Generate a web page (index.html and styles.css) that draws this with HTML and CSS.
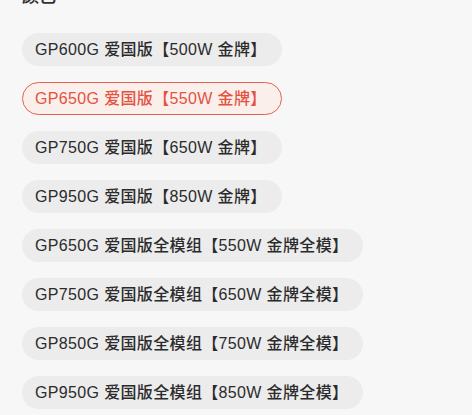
FILE: index.html
```html
<!DOCTYPE html>
<html lang="zh-CN">
<head>
<meta charset="utf-8">
<title>颜色</title>
<link rel="stylesheet" href="styles.css">
</head>
<body>
<section class="spec">
  <h3 class="spec-title">颜色</h3>
  <ul class="options">
    <li class="option">GP600G 爱国版【500W 金牌】</li>
    <li class="option is-selected">GP650G 爱国版【550W 金牌】</li>
    <li class="option">GP750G 爱国版【650W 金牌】</li>
    <li class="option">GP950G 爱国版【850W 金牌】</li>
    <li class="option">GP650G 爱国版全模组【550W 金牌全模】</li>
    <li class="option">GP750G 爱国版全模组【650W 金牌全模】</li>
    <li class="option">GP850G 爱国版全模组【750W 金牌全模】</li>
    <li class="option">GP950G 爱国版全模组【850W 金牌全模】</li>
  </ul>
</section>
</body>
</html>
```
FILE: styles.css
```css
html, body {
  margin: 0;
  padding: 0;
  background: #f7f7f7;
}

body {
  font-family: "Liberation Sans", "Noto Sans CJK SC", sans-serif;
  color: #2b2b2b;
  overflow: hidden;
}

.spec {
  padding: 0 22px;
  margin-top: -14px;
}

.spec-title {
  margin: 0;
  font-size: 17px;
  line-height: 22px;
  font-weight: 700;
  color: #333;
}

.options {
  list-style: none;
  margin: 25px 0 0;
  padding: 0;
  display: flex;
  flex-direction: column;
  align-items: flex-start;
  gap: 16px;
}

.option {
  box-sizing: border-box;
  height: 33px;
  line-height: 31px;
  padding: 0 14px 0 12px;
  border: 1px solid transparent;
  border-radius: 17px;
  background: #ececec;
  font-size: 16px;
  font-weight: 500;
  letter-spacing: 0.35px;
  color: #2b2b2b;
  white-space: nowrap;
}

.option.is-selected {
  background: #fbefec;
  border-color: #e2604f;
  color: #e5523f;
}
```
